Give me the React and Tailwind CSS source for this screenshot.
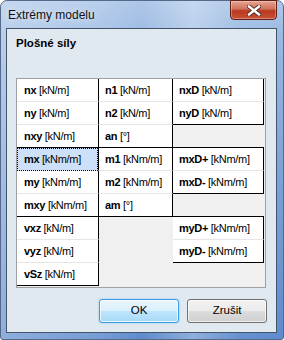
const col1 = [
    { b: 'nx', u: '[kN/m]' },
    { b: 'ny', u: '[kN/m]' },
    { b: 'nxy', u: '[kN/m]', end: true },
    { b: 'mx', u: '[kNm/m]', sel: true },
    { b: 'my', u: '[kNm/m]' },
    { b: 'mxy', u: '[kNm/m]', end: true },
    { b: 'vxz', u: '[kN/m]' },
    { b: 'vyz', u: '[kN/m]' },
    { b: 'vSz', u: '[kN/m]', end: true },
];

const col2 = [
    { b: 'n1', u: '[kN/m]' },
    { b: 'n2', u: '[kN/m]' },
    { b: 'an', u: '[°]', end: true },
    { b: 'm1', u: '[kNm/m]' },
    { b: 'm2', u: '[kNm/m]' },
    { b: 'am', u: '[°]', end: true },
    null,
    null,
    null,
];

const col3 = [
    { b: 'nxD', u: '[kN/m]' },
    { b: 'nyD', u: '[kN/m]', end: true },
    { empty: true, line: true },
    { b: 'mxD+', u: '[kNm/m]' },
    { b: 'mxD-', u: '[kNm/m]', end: true },
    { empty: true, line: true },
    { b: 'myD+', u: '[kNm/m]' },
    { b: 'myD-', u: '[kNm/m]', end: true },
    null,
];

const Cell = ({ cell, pad }) => {
    if (!cell) return <div className="h-[23px]" />;
    if (cell.empty) {
        return <div className={`h-[23px] ${cell.line ? 'border-b border-black' : ''}`} />;
    }
    return (
        <div
            className={`relative h-[23px] flex items-center border-r border-black ${
                cell.end ? 'border-b border-b-black' : 'border-b border-b-[#e6e6e6]'
            } ${cell.sel ? 'bg-[#cce0f9]' : 'bg-white'} ${pad}`}
        >
            {cell.sel && (
                <div className="absolute left-0 top-0 right-0 bottom-[-1px] border border-dotted border-black" />
            )}
            <span className="relative text-[11px] tracking-[-0.3px] text-black leading-none whitespace-nowrap">
                <span className="font-bold">{cell.b}</span> {cell.u}
            </span>
        </div>
    );
};

const Column = ({ cells, width, pad }) => (
    <div className={`flex flex-col ${width}`}>
        {cells.map((c, i) => (
            <Cell key={i} cell={c} pad={pad} />
        ))}
    </div>
);

export default function App() {
    return (
        <div
            className="w-[284px] h-[340px] flex flex-col rounded-t-[7px] rounded-b-[3px] border border-[#55698a] bg-[linear-gradient(90deg,rgba(255,255,255,0.3)_0%,rgba(255,255,255,0.15)_35%,rgba(255,255,255,0)_50%,rgba(255,255,255,0.3)_68%,rgba(255,255,255,0.05)_85%,rgba(255,255,255,0)_100%),linear-gradient(180deg,#adc7e8_0%,#98b8e2_12%,#7fa5da_45%,#5e8bcd_100%)]"
            style={{ fontFamily: '"Liberation Sans", Arial, sans-serif' }}
        >
            {/* title bar */}
            <div className="h-[27px] flex items-start justify-between">
                <div className="pl-[7px] pt-[6px] text-[12px] leading-[16px] text-[#111] [text-shadow:0_0_6px_rgba(255,255,255,0.9)]">
                    Extrémy modelu
                </div>
                <div className="mt-[-1px] mr-[6px] w-[47px] h-[20px] rounded-b-[4px] border border-[#5e2219] bg-[linear-gradient(180deg,#e6a391_0%,#d27560_42%,#b8391f_55%,#c95236_100%)] flex items-center justify-center shadow-[inset_0_0_0_1px_rgba(255,255,255,0.3)]">
                    <svg width="14" height="11" viewBox="0 0 14 11">
                        <path d="M2 1.5 L12 9.5 M12 1.5 L2 9.5" stroke="#4a2520" strokeWidth="4.2" strokeLinecap="square" />
                        <path d="M2 1.5 L12 9.5 M12 1.5 L2 9.5" stroke="#fff" strokeWidth="2.4" strokeLinecap="square" />
                    </svg>
                </div>
            </div>

            {/* client area */}
            <div className="flex-1 ml-[5px] mr-[6px] mb-[6px] border border-[#44546a] bg-[#e0e8f0] flex flex-col">
                <div className="pt-[8px] pl-[9px] h-[21px] text-[11.5px] leading-[13px] font-bold text-black">
                    Plošné síly
                </div>

                <div className="mt-[28px] ml-[9px] w-[250px] h-[210px] border border-[#a0a0a0] bg-[#f0f0f0] flex">
                    <Column cells={col1} width="w-[82px]" pad="pl-[7px]" />
                    <Column cells={col2} width="w-[74px]" pad="pl-[6px]" />
                    <Column cells={col3} width="w-[91px]" pad="pl-[6px]" />
                </div>

                <div className="mt-[11px] pr-[9px] flex justify-end gap-[8px]">
                    <button className="w-[80px] h-[24px] rounded-[3px] border border-[#3c9be0] bg-[linear-gradient(180deg,#eaf6fd_0%,#d9f0fc_50%,#bee6fd_51%,#a7d9f5_100%)] shadow-[inset_0_0_0_1px_rgba(255,255,255,0.7),0_0_2px_#7ecbf5] text-[11.5px] text-black">
                        OK
                    </button>
                    <button className="w-[80px] h-[24px] rounded-[3px] border border-[#707070] bg-[linear-gradient(180deg,#f2f2f2_0%,#ebebeb_50%,#dddddd_51%,#cfcfcf_100%)] shadow-[inset_0_0_0_1px_rgba(255,255,255,0.7)] text-[11.5px] text-black">
                        Zrušit
                    </button>
                </div>
            </div>
        </div>
    );
}
